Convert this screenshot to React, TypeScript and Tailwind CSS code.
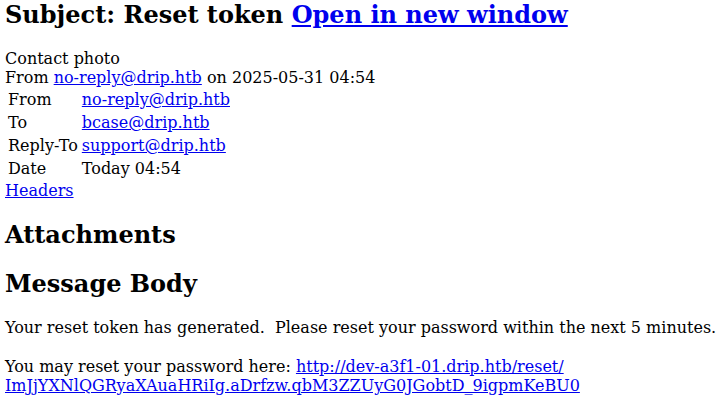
const linkCls = "text-[#0000ee] underline";

const headerRows = [
  { label: "From", value: "no-reply@drip.htb", link: true },
  { label: "To", value: "bcase@drip.htb", link: true },
  { label: "Reply-To", value: "support@drip.htb", link: true },
  { label: "Date", value: "Today 04:54", link: false },
];

export default function App() {
  return (
    <div className="min-h-screen bg-white pl-[5px] font-['DejaVu_Serif',serif] text-[16px] leading-[normal] text-black">
      <h2 className="text-[24px] font-bold leading-[normal]">
        Subject: Reset token{" "}
        <a href="#" className={linkCls}>
          Open in new window
        </a>
      </h2>

      <div className="mt-[20px]">
        <div>Contact photo</div>
        <div>
          From{" "}
          <a href="#" className={linkCls}>
            no-reply@drip.htb
          </a>{" "}
          on 2025-05-31 04:54
        </div>
        <table className="border-separate border-spacing-[2px]">
          <tbody>
            {headerRows.map((row) => (
              <tr key={row.label}>
                <td className="p-[1px]">{row.label}</td>
                <td className="p-[1px]">
                  {row.link ? (
                    <a href="#" className={linkCls}>
                      {row.value}
                    </a>
                  ) : (
                    row.value
                  )}
                </td>
              </tr>
            ))}
          </tbody>
        </table>
        <a href="#" className={linkCls}>
          Headers
        </a>
      </div>

      <h2 className="mt-[20px] text-[24px] font-bold leading-[normal]">Attachments</h2>

      <h2 className="mt-[20px] text-[24px] font-bold leading-[normal]">Message Body</h2>

      <div className="mt-[20px]">
        <p className="whitespace-pre">Your reset token has generated.  Please reset your password within the next 5 minutes.</p>
        <p className="mt-[20px]">
          You may reset your password here:{" "}
          <a href="#" className={linkCls}>
            http://dev-a3f1-01.drip.htb/reset/
            <br />
            ImJjYXNlQGRyaXAuaHRiIg.aDrfzw.qbM3ZZUyG0JGobtD_9igpmKeBU0
          </a>
        </p>
      </div>
    </div>
  );
}
